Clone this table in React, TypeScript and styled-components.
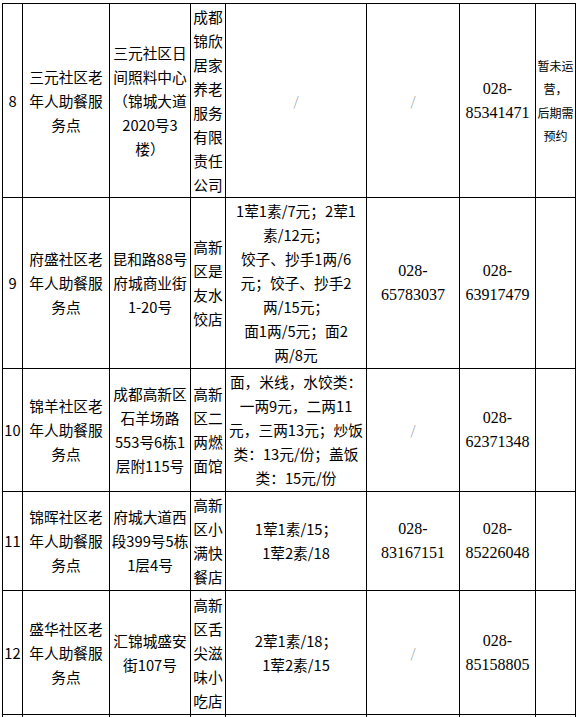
import React from "react";
import styled, { createGlobalStyle } from "styled-components";

type Kind = "num" | "text" | "narrow" | "price" | "phone" | "empty" | "note";

interface RowData {
  no: string;
  name: string[];
  addr: string[];
  provider: string[];
  price: string[] | null;
  phone1: string[] | null;
  phone2: string[] | null;
  note: string[] | null;
  height: number;
}

const GlobalStyle = createGlobalStyle`
  html, body {
    margin: 0;
    padding: 0;
    background: #ffffff;
  }
  body {
    font-family: "Noto Sans CJK SC", "Noto Sans", sans-serif;
    color: #000000;
  }
`;

const Table = styled.table`
  border-collapse: collapse;
  table-layout: fixed;
  width: 574px;
  margin: 3px 0 0 2px;
`;

const Row = styled.tr<{ $h: number }>`
  height: ${({ $h }) => $h}px;
`;

const Cell = styled.td<{ $kind: Kind }>`
  border: 1px solid #000000;
  padding: 0;
  text-align: center;
  vertical-align: middle;
  white-space: nowrap;
  overflow: visible;
  font-family: ${({ $kind }) =>
    $kind === "phone"
      ? `"Liberation Serif", "Noto Sans CJK SC", serif`
      : `"Noto Sans CJK SC", "Noto Sans", sans-serif`};
  font-size: ${({ $kind }) =>
    $kind === "phone" ? "16px" : $kind === "note" ? "12px" : $kind === "empty" ? "13px" : "14.7px"};
  line-height: ${({ $kind }) => ($kind === "note" ? "23.5px" : "24px")};
  color: ${({ $kind }) => ($kind === "empty" ? "#8b90a3" : "#000000")};
  font-weight: ${({ $kind }) => ($kind === "empty" ? 300 : 400)};
`;

const rows: RowData[] = [
  {
    no: "8",
    name: ["三元社区老", "年人助餐服", "务点"],
    addr: ["三元社区日", "间照料中心", "（锦城大道", "2020号3", "楼）"],
    provider: ["成都", "锦欣", "居家", "养老", "服务", "有限", "责任", "公司"],
    price: null,
    phone1: null,
    phone2: ["028-", "85341471"],
    note: ["暂未运", "营，", "后期需", "预约"],
    height: 194,
  },
  {
    no: "9",
    name: ["府盛社区老", "年人助餐服", "务点"],
    addr: ["昆和路88号", "府城商业街", "1-20号"],
    provider: ["高新", "区是", "友水", "饺店"],
    price: [
      "1荤1素/7元；2荤1",
      "素/12元；",
      "饺子、抄手1两/6",
      "元；饺子、抄手2",
      "两/15元；",
      "面1两/5元；面2",
      "两/8元",
    ],
    phone1: ["028-", "65783037"],
    phone2: ["028-", "63917479"],
    note: [],
    height: 171,
  },
  {
    no: "10",
    name: ["锦羊社区老", "年人助餐服", "务点"],
    addr: ["成都高新区", "石羊场路", "553号6栋1", "层附115号"],
    provider: ["高新", "区二", "两燃", "面馆"],
    price: [
      "面，米线，水饺类：",
      "一两9元，二两11",
      "元，三两13元；炒饭",
      "类：13元/份；盖饭",
      "类：15元/份",
    ],
    phone1: null,
    phone2: ["028-", "62371348"],
    note: [],
    height: 123,
  },
  {
    no: "11",
    name: ["锦晖社区老", "年人助餐服", "务点"],
    addr: ["府城大道西", "段399号5栋", "1层4号"],
    provider: ["高新", "区小", "满快", "餐店"],
    price: ["1荤1素/15；", "1荤2素/18"],
    phone1: ["028-", "83167151"],
    phone2: ["028-", "85226048"],
    note: [],
    height: 99,
  },
  {
    no: "12",
    name: ["盛华社区老", "年人助餐服", "务点"],
    addr: ["汇锦城盛安", "街107号"],
    provider: ["高新", "区舌", "尖滋", "味小", "吃店"],
    price: ["2荤1素/18；", "1荤2素/15"],
    phone1: null,
    phone2: ["028-", "85158805"],
    note: [],
    height: 124,
  },
];

const colWidths = [20, 87, 81, 35, 141, 93, 76, 40];

const Lines: React.FC<{ lines: string[] }> = ({ lines }) => (
  <>
    {lines.map((l, i) => (
      <React.Fragment key={i}>
        {i > 0 && <br />}
        {l}
      </React.Fragment>
    ))}
  </>
);

const ValueCell: React.FC<{ lines: string[] | null; kind: Kind }> = ({ lines, kind }) =>
  lines === null ? (
    <Cell $kind="empty">/</Cell>
  ) : (
    <Cell $kind={kind}>
      <Lines lines={lines} />
    </Cell>
  );

export default function App() {
  return (
    <>
      <GlobalStyle />
      <Table>
        <colgroup>
          {colWidths.map((w, i) => (
            <col key={i} style={{ width: w }} />
          ))}
        </colgroup>
        <tbody>
          {rows.map((r) => (
            <Row key={r.no} $h={r.height}>
              <Cell $kind="num">{r.no}</Cell>
              <Cell $kind="text">
                <Lines lines={r.name} />
              </Cell>
              <Cell $kind="text">
                <Lines lines={r.addr} />
              </Cell>
              <Cell $kind="narrow">
                <Lines lines={r.provider} />
              </Cell>
              <ValueCell lines={r.price} kind="price" />
              <ValueCell lines={r.phone1} kind="phone" />
              <ValueCell lines={r.phone2} kind="phone" />
              <Cell $kind="note">
                <Lines lines={r.note ?? []} />
              </Cell>
            </Row>
          ))}
          <Row $h={60}>
            {colWidths.map((_, i) => (
              <Cell key={i} $kind="text" />
            ))}
          </Row>
        </tbody>
      </Table>
    </>
  );
}
